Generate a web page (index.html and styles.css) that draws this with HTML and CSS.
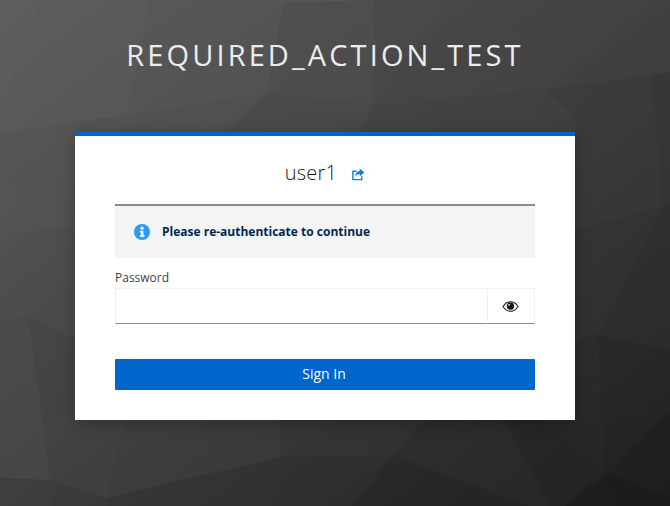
FILE: index.html
```html
<!DOCTYPE html>
<html lang="en">
<head>
<meta charset="utf-8">
<title>Sign in</title>
<link rel="stylesheet" href="styles.css">
</head>
<body>
<svg class="backdrop" viewBox="0 0 670 506" preserveAspectRatio="none" aria-hidden="true">
  <defs>
    <linearGradient id="bg" x1="0" y1="0" x2="1" y2="1">
      <stop offset="0" stop-color="#5f5f5f"/>
      <stop offset="0.5" stop-color="#414141"/>
      <stop offset="1" stop-color="#1b1b1b"/>
    </linearGradient>
  </defs>
  <rect width="670" height="506" fill="url(#bg)"/>
  <g opacity=".55">
  <polygon points="0,0 40,0 0,115" fill="#5e5e5e"/>
  <polygon points="40,0 150,0 127,115 0,135 0,115" fill="#5b5b5b"/>
  <polygon points="150,0 283,3 268,93 127,115" fill="#575757"/>
  <polygon points="150,0 420,0 283,3" fill="#5a5a5a"/>
  <polygon points="283,3 375,0 373,105 268,93" fill="#4e4e4e"/>
  <polygon points="375,0 450,0 373,105" fill="#484848"/>
  <polygon points="450,0 495,0 547,89 373,105" fill="#454545"/>
  <polygon points="495,0 652,0 547,89" fill="#444444"/>
  <polygon points="652,0 670,0 670,72 652,75 547,89" fill="#414141"/>
  <polygon points="0,135 127,115 268,93 220,135" fill="#525252"/>
  <polygon points="268,93 373,105 360,135 220,135" fill="#494949"/>
  <polygon points="373,105 547,89 588,133 360,135" fill="#414141"/>
  <polygon points="547,89 652,75 663,207 575,230 575,120" fill="#3a3a3a"/>
  <polygon points="652,75 670,72 670,205 663,207" fill="#353535"/>
  <polygon points="575,230 663,207 597,335 575,340" fill="#343434"/>
  <polygon points="663,207 670,205 670,350 597,335" fill="#2f2f2f"/>
  <polygon points="575,340 597,335 602,420 575,420" fill="#2c2c2c"/>
  <polygon points="597,335 670,350 670,412 605,473 602,420" fill="#282828"/>
  <polygon points="0,135 75,120 75,227 32,232 0,160" fill="#555555"/>
  <polygon points="0,160 32,232 0,233" fill="#575757"/>
  <polygon points="0,233 32,232 0,258" fill="#525252"/>
  <polygon points="0,258 32,232 75,227 75,263 28,317 0,320" fill="#4e4e4e"/>
  <polygon points="28,317 75,263 75,340" fill="#4c4c4c"/>
  <polygon points="0,320 28,317 40,400 50,480 0,478" fill="#4a4a4a"/>
  <polygon points="28,317 75,340 75,420 94,420 50,480 40,400" fill="#434343"/>
  <polygon points="0,478 50,480 51,506 0,506" fill="#3c3c3c"/>
  <polygon points="50,480 107,498 107,506 51,506" fill="#383838"/>
  <polygon points="50,480 94,420 124,420 107,498" fill="#424242"/>
  <polygon points="124,420 280,420 280,457 107,498" fill="#3e3e3e"/>
  <polygon points="107,498 280,457 273,506 107,506" fill="#313131"/>
  <polygon points="280,420 325,420 280,457" fill="#363636"/>
  <polygon points="280,457 325,420 423,420 393,456" fill="#353535"/>
  <polygon points="280,457 393,456 352,506 273,506" fill="#2f2f2f"/>
  <polygon points="393,456 530,506 352,506" fill="#252525"/>
  <polygon points="393,456 423,420 504,420 550,506 530,506" fill="#2d2d2d"/>
  <polygon points="504,420 543,420 605,473 566,506 550,506" fill="#262626"/>
  <polygon points="543,420 602,420 605,473" fill="#2a2a2a"/>
  <polygon points="602,420 670,412 605,473" fill="#252525"/>
  <polygon points="605,473 670,412 670,498" fill="#202020"/>
  <polygon points="605,473 670,498 670,506 615,506" fill="#1a1a1a"/>
  <polygon points="605,473 615,506 566,506" fill="#1c1c1c"/>
  </g>
</svg>

<main class="page">
  <h1 class="realm">REQUIRED_ACTION_TEST</h1>
  <section class="card">
    <div class="user-row">
      <span class="username">user1</span>
      <a class="restart" href="#" aria-label="Restart login">
        <svg viewBox="0 0 14 13" width="14" height="13" aria-hidden="true">
          <path d="M1.2 2.6H5.6V4H2.6V10.9H10.1V8.2H11.5V12.3H1.2Z" fill="#0d83cd"/>
          <path d="M8.7 0.6L13.4 4.5L8.7 8.4V6C6.6 6 5.2 6.7 4.2 8.8C4.2 5.5 5.9 3.4 8.7 3.1Z" fill="#0d83cd"/>
        </svg>
      </a>
    </div>

    <div class="alert">
      <svg class="alert-icon" viewBox="0 0 16 16" width="16" height="16" aria-hidden="true">
        <circle cx="8" cy="8" r="8" fill="#2b9af3"/>
        <circle cx="8" cy="4.2" r="1.6" fill="#fff"/>
        <path d="M5.9 6.8H9.4V11.1H10.4V12.9H5.9V11.1H6.9V8.6H5.9Z" fill="#fff"/>
      </svg>
      <span class="alert-text">Please re-authenticate to continue</span>
    </div>

    <form class="form">
      <label class="label" for="password">Password</label>
      <div class="input-group">
        <input class="input" id="password" type="password">
        <button class="reveal" type="button" aria-label="Show password">
          <svg viewBox="0 0 18 12" width="17" height="11" aria-hidden="true">
            <path d="M0.8 6C3 2.4 5.8 0.8 9 0.8C12.2 0.8 15 2.4 17.2 6C15 9.6 12.2 11.2 9 11.2C5.8 11.2 3 9.6 0.8 6Z" fill="none" stroke="#151515" stroke-width="1.1"/>
            <circle cx="9" cy="5.6" r="3.9" fill="#151515"/>
            <circle cx="7.6" cy="4.2" r="1" fill="#fff"/>
          </svg>
        </button>
      </div>
      <button class="submit" type="submit">Sign In</button>
    </form>
  </section>
</main>
</body>
</html>
```

FILE: styles.css
```css
* { box-sizing: border-box; }

html, body {
  margin: 0;
  height: 100%;
}

body {
  font-family: "Open Sans", "Liberation Sans", sans-serif;
  background: #3c3c3c;
  color: #151515;
  overflow: hidden;
}

.backdrop {
  position: absolute;
  inset: 0;
  width: 100%;
  height: 100%;
}

.page {
  position: relative;
  display: flex;
  flex-direction: column;
  align-items: center;
  padding-right: 20px;
}

.realm {
  margin: 35px 0 0;
  height: 97px;
  font-size: 29px;
  line-height: 40px;
  font-weight: 400;
  letter-spacing: 3.1px;
  color: #ececec;
  white-space: nowrap;
}

.card {
  width: 500px;
  height: 288px;
  padding: 0 40px;
  background: #fff;
  border-top: 4px solid #0066cc;
  box-shadow: 0 4px 16px rgba(3, 3, 3, .25);
}

.user-row {
  display: flex;
  justify-content: center;
  align-items: center;
  height: 68px;
  padding-top: 6px;
  gap: 14px;
}

.username {
  font-size: 20px;
  line-height: 24px;
  font-weight: 300;
  letter-spacing: .2px;
  color: #151515;
}

.restart {
  display: flex;
  margin-top: 3px;
}

.alert {
  display: flex;
  align-items: center;
  gap: 12px;
  height: 54px;
  padding-left: 19px;
  background: #f4f4f4;
  border-top: 2px solid #8a8d90;
}

.alert-icon { flex: none; }

.alert-text {
  margin-bottom: 2px;
  font-size: 12px;
  font-weight: 700;
  color: #002952;
}

.form {
  display: flex;
  flex-direction: column;
}

.label {
  margin-top: 11px;
  font-size: 12px;
  line-height: 18px;
  color: #3c3f42;
}

.input-group {
  display: flex;
  height: 36px;
  margin-top: 1px;
}

.input {
  flex: 1;
  min-width: 0;
  margin: 0;
  padding: 0 8px;
  border: 1px solid #f0f0f0;
  border-bottom: 1px solid #8a8d90;
  background: #fff;
  outline: none;
}

.reveal {
  display: flex;
  align-items: center;
  justify-content: center;
  width: 47px;
  padding: 0 2px 0 0;
  border: 1px solid #f0f0f0;
  border-left: 0;
  border-bottom: 1px solid #8a8d90;
  background: #fff;
}

.submit {
  height: 31px;
  margin-top: 35px;
  padding: 0 2px 2px 0;
  border: 0;
  border-radius: 1px;
  background: #0066cc;
  color: #fff;
  font-family: inherit;
  font-size: 14px;
}
```
